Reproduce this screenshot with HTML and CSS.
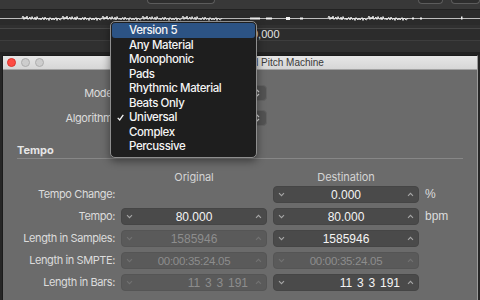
FILE: index.html
```html
<!DOCTYPE html>
<html>
<head>
<meta charset="utf-8">
<title>Time and Pitch Machine</title>
<link rel="stylesheet" href="styles.css">
</head>
<body>
<div class="screen">
  <div class="daw">
    <div class="toolbar">
      <span class="tb-btn tb1"></span><span class="tb-btn tb2"></span><span class="tb-btn tb3"></span>
    </div>
    <div class="wave">
      <svg width="480" height="15" viewBox="0 0 480 15">
        <defs>
          <path id="chunk" d="M0 5.5 l1 -2 l1 3.5 l1 -2.5 l1 2 l1 -3 l1 3.5 l1 -1.5 l1 -1 l1 2.5 l1 -3 l1 2 l1 1 l1 -2.5 l1 3 l1 -3.5 l1 2 l1 1 l1 -1.5 l1 2 l1 -2 l1 -0.5 l1 2.5 l1 -3 l1 2 l1 0.5 l1 -1.5 l1 2.5 l1 -3 l1 1.5 l1 1 l1 -2 l1 2 l1 -1 l1 -1.5 l1 3 l1 -2.5 l1 1 l1 1 l1 -0.5 l1 -1.5"/>
        </defs>
        <line x1="0" y1="8.5" x2="480" y2="8.5" stroke="#bdbdbd" stroke-width="1"/>
        <g fill="none" stroke="#f2f2f2" stroke-width="0.9" transform="translate(0 2.5)">
          <use href="#chunk" x="22"/><use href="#chunk" x="62"/><use href="#chunk" x="102"/><use href="#chunk" x="142"/>
          <use href="#chunk" x="182"/>
          <use href="#chunk" x="328"/><use href="#chunk" x="368"/>
        </g>
        <g fill="#f2f2f2">
          <rect x="250" y="7.5" width="10" height="2"/><rect x="266" y="7.5" width="6" height="2"/>
          <rect x="286" y="7" width="4" height="3"/><rect x="300" y="7.5" width="3" height="2"/>
          <rect x="412" y="7.5" width="2" height="2"/><rect x="420" y="7.5" width="2" height="2"/>
          <rect x="461" y="6.5" width="1.5" height="3"/>
        </g>
      </svg>
    </div>
    <div class="lane-gap"></div>
    <div class="ruler"><span class="ruler-text">0,000</span></div>
    <div class="lane"></div>
  </div>

  <div class="window">
    <div class="titlebar">
      <span class="light red"></span><span class="light"></span><span class="light"></span>
      <span class="title">Time and Pitch Machine</span>
    </div>
    <div class="content">
      <div class="top-form">
        <span class="label">Mode:</span>
        <div class="popup">
          <svg class="updown" width="7" height="10" viewBox="0 0 7 10"><path d="M1 4 L3.5 1.5 L6 4 M1 6 L3.5 8.5 L6 6" fill="none" stroke="currentColor" stroke-width="1.1"/></svg>
        </div>
        <span class="label">Algorithm:</span>
        <div class="popup">
          <svg class="updown" width="7" height="10" viewBox="0 0 7 10"><path d="M1 4 L3.5 1.5 L6 4 M1 6 L3.5 8.5 L6 6" fill="none" stroke="currentColor" stroke-width="1.1"/></svg>
        </div>
      </div>

      <div class="section-title">Tempo</div>

      <div class="grid head">
        <span></span><span class="colhead">Original</span><span class="colhead">Destination</span><span></span>
      </div>

      <div class="grid rows">
        <span class="label">Tempo Change:</span>
        <span></span>
        <div class="field">
          <svg class="chev" width="7" height="5" viewBox="0 0 7 5"><path d="M1 1.2 L3.5 3.7 L6 1.2" fill="none" stroke="currentColor" stroke-width="1.1"/></svg>
          <span class="val">0.000</span>
          <svg class="chev" width="7" height="5" viewBox="0 0 7 5"><path d="M1 3.8 L3.5 1.3 L6 3.8" fill="none" stroke="currentColor" stroke-width="1.1"/></svg>
        </div>
        <span class="unit">%</span>

        <span class="label">Tempo:</span>
        <div class="field">
          <svg class="chev" width="7" height="5" viewBox="0 0 7 5"><path d="M1 1.2 L3.5 3.7 L6 1.2" fill="none" stroke="currentColor" stroke-width="1.1"/></svg>
          <span class="val">80.000</span>
          <svg class="chev" width="7" height="5" viewBox="0 0 7 5"><path d="M1 3.8 L3.5 1.3 L6 3.8" fill="none" stroke="currentColor" stroke-width="1.1"/></svg>
        </div>
        <div class="field">
          <svg class="chev" width="7" height="5" viewBox="0 0 7 5"><path d="M1 1.2 L3.5 3.7 L6 1.2" fill="none" stroke="currentColor" stroke-width="1.1"/></svg>
          <span class="val">80.000</span>
          <svg class="chev" width="7" height="5" viewBox="0 0 7 5"><path d="M1 3.8 L3.5 1.3 L6 3.8" fill="none" stroke="currentColor" stroke-width="1.1"/></svg>
        </div>
        <span class="unit">bpm</span>

        <span class="label">Length in Samples:</span>
        <div class="field disabled">
          <svg class="chev" width="7" height="5" viewBox="0 0 7 5"><path d="M1 1.2 L3.5 3.7 L6 1.2" fill="none" stroke="currentColor" stroke-width="1.1"/></svg>
          <span class="val">1585946</span>
          <svg class="chev" width="7" height="5" viewBox="0 0 7 5"><path d="M1 3.8 L3.5 1.3 L6 3.8" fill="none" stroke="currentColor" stroke-width="1.1"/></svg>
        </div>
        <div class="field">
          <svg class="chev" width="7" height="5" viewBox="0 0 7 5"><path d="M1 1.2 L3.5 3.7 L6 1.2" fill="none" stroke="currentColor" stroke-width="1.1"/></svg>
          <span class="val">1585946</span>
          <svg class="chev" width="7" height="5" viewBox="0 0 7 5"><path d="M1 3.8 L3.5 1.3 L6 3.8" fill="none" stroke="currentColor" stroke-width="1.1"/></svg>
        </div>
        <span></span>

        <span class="label">Length in SMPTE:</span>
        <div class="field disabled">
          <svg class="chev" width="7" height="5" viewBox="0 0 7 5"><path d="M1 1.2 L3.5 3.7 L6 1.2" fill="none" stroke="currentColor" stroke-width="1.1"/></svg>
          <span class="val smpte">00:00:35:24.05</span>
          <svg class="chev" width="7" height="5" viewBox="0 0 7 5"><path d="M1 3.8 L3.5 1.3 L6 3.8" fill="none" stroke="currentColor" stroke-width="1.1"/></svg>
        </div>
        <div class="field disabled">
          <svg class="chev" width="7" height="5" viewBox="0 0 7 5"><path d="M1 1.2 L3.5 3.7 L6 1.2" fill="none" stroke="currentColor" stroke-width="1.1"/></svg>
          <span class="val smpte">00:00:35:24.05</span>
          <svg class="chev" width="7" height="5" viewBox="0 0 7 5"><path d="M1 3.8 L3.5 1.3 L6 3.8" fill="none" stroke="currentColor" stroke-width="1.1"/></svg>
        </div>
        <span></span>

        <span class="label">Length in Bars:</span>
        <div class="field disabled">
          <svg class="chev" width="7" height="5" viewBox="0 0 7 5"><path d="M1 1.2 L3.5 3.7 L6 1.2" fill="none" stroke="currentColor" stroke-width="1.1"/></svg>
          <span class="val bars">11 3 3 191</span>
          <svg class="chev" width="7" height="5" viewBox="0 0 7 5"><path d="M1 3.8 L3.5 1.3 L6 3.8" fill="none" stroke="currentColor" stroke-width="1.1"/></svg>
        </div>
        <div class="field">
          <svg class="chev" width="7" height="5" viewBox="0 0 7 5"><path d="M1 1.2 L3.5 3.7 L6 1.2" fill="none" stroke="currentColor" stroke-width="1.1"/></svg>
          <span class="val bars">11 3 3 191</span>
          <svg class="chev" width="7" height="5" viewBox="0 0 7 5"><path d="M1 3.8 L3.5 1.3 L6 3.8" fill="none" stroke="currentColor" stroke-width="1.1"/></svg>
        </div>
        <span></span>
      </div>
    </div>
  </div>

  <div class="menu">
    <div class="item hl"><span class="check"></span><span>Version 5</span></div>
    <div class="item"><span class="check"></span><span>Any Material</span></div>
    <div class="item"><span class="check"></span><span>Monophonic</span></div>
    <div class="item"><span class="check"></span><span>Pads</span></div>
    <div class="item"><span class="check"></span><span>Rhythmic Material</span></div>
    <div class="item"><span class="check"></span><span>Beats Only</span></div>
    <div class="item"><span class="check"><svg width="7" height="7" viewBox="0 0 7 7"><path d="M0.7 3.9 L2.7 5.9 L6.3 0.9" fill="none" stroke="currentColor" stroke-width="1.3"/></svg></span><span>Universal</span></div>
    <div class="item"><span class="check"></span><span>Complex</span></div>
    <div class="item"><span class="check"></span><span>Percussive</span></div>
  </div>
</div>
</body>
</html>
```

FILE: styles.css
```css
* { box-sizing: border-box; }

body {
  margin: 0;
  background: #262626;
  font-family: Inter, "Liberation Sans", sans-serif;
}

.screen {
  position: relative;
  width: 480px;
  height: 300px;
  overflow: hidden;
  background: #262626;
}

/* ---------- DAW background ---------- */
.daw { height: 55px; }

.toolbar {
  height: 10px;
  background: #383838;
  border-bottom: 1px solid #222;
  display: flex;
  align-items: flex-start;
}
.tb-btn {
  height: 4px;
  border: 1px solid #5c5c5c;
  border-top: none;
  border-radius: 0 0 4px 4px;
  background: #2e2e2e;
}
.tb1 { margin-left: 147px; width: 70px; }
.tb2 { margin-left: 203px; width: 25px; }
.tb3 { margin-left: 8px; width: 30px; }

.wave { height: 15px; background: #2b2b2b; }
.wave svg { display: block; }

.lane-gap {
  height: 4px;
  background: #303030;
  border-bottom: 1px solid #474747;
}

.ruler {
  height: 12px;
  background: #2c2c2c;
  border-bottom: 1px solid #3d3d3d;
  padding-left: 252px;
  font-family: "Liberation Sans", sans-serif;
  font-size: 11px;
  line-height: 11px;
  color: #e4e4e4;
}

.lane {
  height: 14px;
  background: #303030;
  border-bottom: 3px solid #222;
}

/* ---------- Window ---------- */
.window {
  margin: 0 2px;
  height: 245px;
  background: #6b6b6b;
  border: 1px solid #1b1b1b;
  border-bottom: none;
  border-right-color: #9a9a9a;
}

.titlebar {
  height: 14px;
  background: linear-gradient(#e6e6e6, #d6d6d6);
  border-bottom: 1px solid #a2a2a2;
  display: flex;
  align-items: center;
  padding-left: 4px;
}
.light {
  width: 9px;
  height: 9px;
  border-radius: 50%;
  background: #cdcdcd;
  border: 1px solid #adadad;
  margin-right: 5px;
}
.light.red { background: #fd4b43; border-color: #d9352e; }
.title {
  margin-left: 168px;
  font-family: "Liberation Sans", sans-serif;
  font-size: 10px;
  color: #3a3a3a;
}

.content { padding-top: 15px; }

.label {
  text-align: right;
  font-size: 11px;
  line-height: 17px;
  color: #dcdcdc;
  white-space: nowrap;
  letter-spacing: -0.4px;
}

.top-form {
  display: grid;
  grid-template-columns: 112px 146px;
  grid-auto-rows: 16px;
  column-gap: 6px;
  row-gap: 9px;
}
.top-form .label { line-height: 16px; }

.popup {
  border-radius: 4px;
  background: #535353;
  border: 1px solid #626262;
  display: flex;
  align-items: center;
  justify-content: flex-end;
  padding-right: 6px;
  color: #d8d8d8;
}

.section-title {
  margin: 18px 14px 0;
  padding-bottom: 1px;
  border-bottom: 1px solid #878787;
  font-size: 11px;
  font-weight: 700;
  line-height: 13px;
  color: #e6e6e6;
}

.grid {
  display: grid;
  grid-template-columns: 112px 146px 146px auto;
  column-gap: 6px;
}
.head {
  margin-top: 12px;
  margin-bottom: 2px;
  height: 13px;
}
.colhead {
  text-align: center;
  font-size: 11px;
  line-height: 13px;
  color: #d4d4d4;
  letter-spacing: -0.1px;
}
.rows {
  grid-auto-rows: 17px;
  row-gap: 5px;
}

.field {
  border-radius: 4px;
  background: #4a4a4a;
  border: 1px solid #454545;
  display: flex;
  align-items: center;
  padding: 0 4px;
  color: #a6a6a6;
}
.field .chev { flex: none; }
.field .val {
  flex: 1;
  text-align: center;
  font-family: "Liberation Sans", sans-serif;
  font-size: 12px;
  color: #f4f4f4;
  white-space: nowrap;
  overflow: hidden;
}
.field .val.smpte {
  font-size: 11.5px;
  letter-spacing: -0.3px;
}
.field .val.bars {
  text-align: right;
  padding-right: 7px;
  word-spacing: 1.5px;
}
.field.disabled {
  background: #5a5a5a;
  border-color: #555;
  color: #727272;
}
.field.disabled .val { color: #8d8d8d; }

.unit {
  font-family: "Liberation Sans", sans-serif;
  font-size: 12px;
  line-height: 17px;
  color: #dcdcdc;
}

/* ---------- Popup menu ---------- */
.menu {
  position: absolute;
  left: 110px;
  top: 21px;
  width: 147px;
  height: 137px;
  background: #1e1e1e;
  border: 1px solid #8e8e8e;
  border-radius: 5px;
  padding: 1px;
  box-shadow: 0 3px 8px rgba(0, 0, 0, 0.45);
}
.item {
  height: 14.5px;
  display: flex;
  align-items: center;
  border-radius: 3px;
  font-size: 11.5px;
  font-weight: 500;
  letter-spacing: -0.4px;
  color: #f5f5f5;
}
.item.hl { background: #2c5384; }
.check {
  width: 17px;
  padding-left: 5px;
  display: flex;
  align-items: center;
  color: #f5f5f5;
}
.check svg { display: block; }
```
